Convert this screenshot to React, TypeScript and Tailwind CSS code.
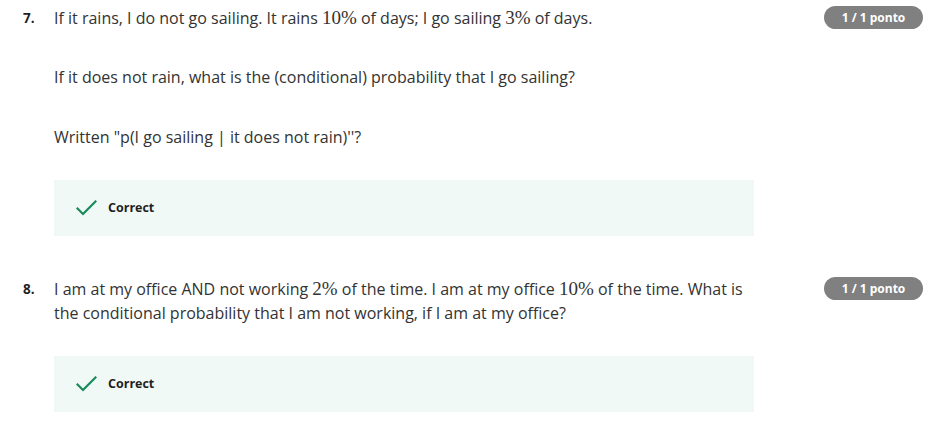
const Math = ({ children }: { children: React.ReactNode }) => (
  <span className="font-['Liberation_Serif',serif] text-[19px] leading-none">{children}</span>
);

function Check() {
  return (
    <svg width="21" height="16" viewBox="0 0 21 16" fill="none">
      <path d="M1.5 8.5 L7 14 L19.5 1.5" stroke="#1a8a5a" strokeWidth="2.2" strokeLinecap="square" />
    </svg>
  );
}

function Correct() {
  return (
    <div className="w-[700px] h-[56px] bg-[#f0f9f6] flex items-center pl-[22px] gap-[11px]">
      <Check />
      <span className="text-[12.5px] font-bold text-[#1f1f1f]">Correct</span>
    </div>
  );
}

function Badge() {
  return (
    <span className="ml-auto shrink-0 h-[23px] w-[99px] rounded-full bg-[#808080] text-white text-[12px] font-bold flex items-center justify-center">
      1 / 1 ponto
    </span>
  );
}

export default function App() {
  return (
    <div className="bg-white min-h-[425px] w-[945px] pt-[6px] pl-[23px] pr-[22px] font-['Open_Sans',sans-serif] text-[#333333] text-[16px] leading-[24px]">
      {/* question 7 */}
      <div className="flex">
        <span className="w-[31px] shrink-0 text-[13.5px] font-bold text-[#1f1f1f]">7.</span>
        <div className="flex-1">
          <p>
            If it rains, I do not go sailing. It rains <Math>10%</Math> of days; I go sailing <Math>3%</Math> of days.
          </p>
          <p className="mt-[35px]">If it does not rain, what is the (conditional) probability that I go sailing?</p>
          <p className="mt-[36px]">Written "p(I go sailing | it does not rain)''?</p>
          <div className="mt-[31px]">
            <Correct />
          </div>
        </div>
        <Badge />
      </div>

      {/* question 8 */}
      <div className="flex mt-[41px]">
        <span className="w-[31px] shrink-0 text-[13.5px] font-bold text-[#1f1f1f]">8.</span>
        <div className="flex-1">
          <p className="max-w-[700px]">
            I am at my office AND not working <Math>2%</Math> of the time. I am at my office <Math>10%</Math> of the time. What is the conditional probability that I am not working, if I am at my office?
          </p>
          <div className="mt-[31px]">
            <Correct />
          </div>
        </div>
        <Badge />
      </div>
    </div>
  );
}
